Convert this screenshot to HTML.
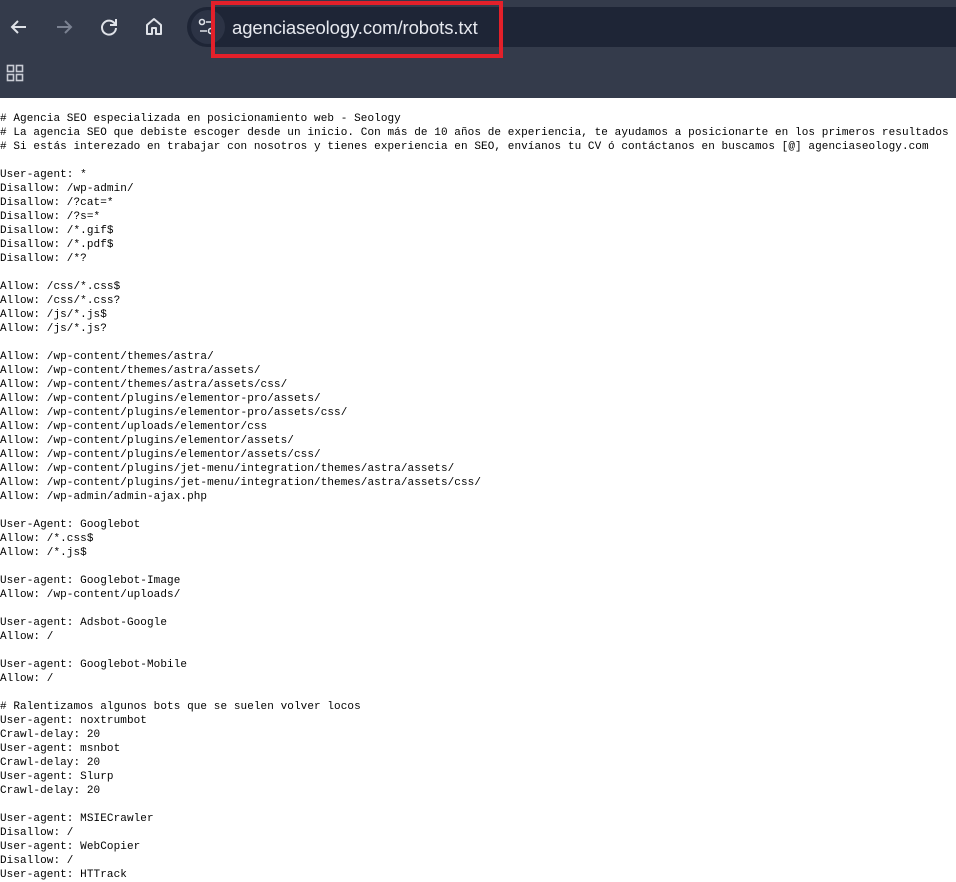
<!DOCTYPE html>
<html><head><meta charset="utf-8"><style>
html,body{margin:0;padding:0;width:956px;height:878px;overflow:hidden;background:#fff}
.top{position:absolute;left:0;top:0;width:956px;height:98px;background:#343b4b}
.omni{position:absolute;left:187px;top:7px;width:800px;height:40px;border-radius:20px;background:#1e2536}
.chip{position:absolute;left:191px;top:10px;width:34px;height:34px;border-radius:17px;background:#2c3345}
.url{position:absolute;left:232px;top:17px;font:18.5px "Liberation Sans",sans-serif;color:#e6e8ee;letter-spacing:-0.1px}
.red{position:absolute;left:211px;top:1px;width:284px;height:49px;border:4px solid #e3202a}
pre{position:absolute;left:0;top:112px;margin:0;font:11px/14px "Liberation Mono",monospace;letter-spacing:0.08px;color:#000;white-space:pre}
svg{position:absolute}
</style></head><body>
<div class="top"></div>
<div class="omni"></div>
<div class="chip"></div>
<svg style="left:8px;top:16px" width="22" height="22" viewBox="0 0 22 22"><path d="M18 11H4M10 5l-6 6 6 6" stroke="#dfe2e8" stroke-width="2" fill="none"/></svg>
<svg style="left:53px;top:16px" width="22" height="22" viewBox="0 0 22 22"><path d="M4 11h14M12 5l6 6-6 6" stroke="#7b8292" stroke-width="2" fill="none"/></svg>
<svg style="left:98px;top:16px" width="22" height="22" viewBox="0 0 22 22"><path d="M17 8A7 7 0 1 0 18 12" stroke="#dfe2e8" stroke-width="2" fill="none"/><path d="M18 3v6h-6" stroke="#dfe2e8" stroke-width="2" fill="none"/></svg>
<svg style="left:143px;top:15px" width="22" height="22" viewBox="0 0 22 22"><path d="M4 10l7-6 7 6v9h-5v-6h-4v6H4z" stroke="#dfe2e8" stroke-width="2" fill="none" stroke-linejoin="round"/></svg>
<svg style="left:197px;top:17px" width="20" height="20" viewBox="0 0 20 20"><circle cx="5" cy="5" r="2.5" stroke="#dfe2e8" stroke-width="1.6" fill="none"/><path d="M9 5h7M3 14h7" stroke="#dfe2e8" stroke-width="1.6"/><circle cx="14" cy="14" r="2.5" stroke="#dfe2e8" stroke-width="1.6" fill="none"/></svg>
<svg style="left:6px;top:64px" width="20" height="20" viewBox="0 0 20 20"><g stroke="#c9ccd4" stroke-width="1.6" fill="none"><rect x="1.5" y="1.5" width="6" height="6"/><rect x="10.5" y="1.5" width="6" height="6"/><rect x="1.5" y="10.5" width="6" height="6"/><rect x="10.5" y="10.5" width="6" height="6"/></g></svg>
<div class="url">agenciaseology.com/robots.txt</div>
<div class="red"></div>
<pre># Agencia SEO especializada en posicionamiento web - Seology
# La agencia SEO que debiste escoger desde un inicio. Con más de 10 años de experiencia, te ayudamos a posicionarte en los primeros resultados
# Si estás interezado en trabajar con nosotros y tienes experiencia en SEO, envíanos tu CV ó contáctanos en buscamos [@] agenciaseology.com

User-agent: *
Disallow: /wp-admin/
Disallow: /?cat=*
Disallow: /?s=*
Disallow: /*.gif$
Disallow: /*.pdf$
Disallow: /*?

Allow: /css/*.css$
Allow: /css/*.css?
Allow: /js/*.js$
Allow: /js/*.js?

Allow: /wp-content/themes/astra/
Allow: /wp-content/themes/astra/assets/
Allow: /wp-content/themes/astra/assets/css/
Allow: /wp-content/plugins/elementor-pro/assets/
Allow: /wp-content/plugins/elementor-pro/assets/css/
Allow: /wp-content/uploads/elementor/css
Allow: /wp-content/plugins/elementor/assets/
Allow: /wp-content/plugins/elementor/assets/css/
Allow: /wp-content/plugins/jet-menu/integration/themes/astra/assets/
Allow: /wp-content/plugins/jet-menu/integration/themes/astra/assets/css/
Allow: /wp-admin/admin-ajax.php

User-Agent: Googlebot
Allow: /*.css$
Allow: /*.js$

User-agent: Googlebot-Image
Allow: /wp-content/uploads/

User-agent: Adsbot-Google
Allow: /

User-agent: Googlebot-Mobile
Allow: /

# Ralentizamos algunos bots que se suelen volver locos
User-agent: noxtrumbot
Crawl-delay: 20
User-agent: msnbot
Crawl-delay: 20
User-agent: Slurp
Crawl-delay: 20

User-agent: MSIECrawler
Disallow: /
User-agent: WebCopier
Disallow: /
User-agent: HTTrack</pre>
</body></html>
